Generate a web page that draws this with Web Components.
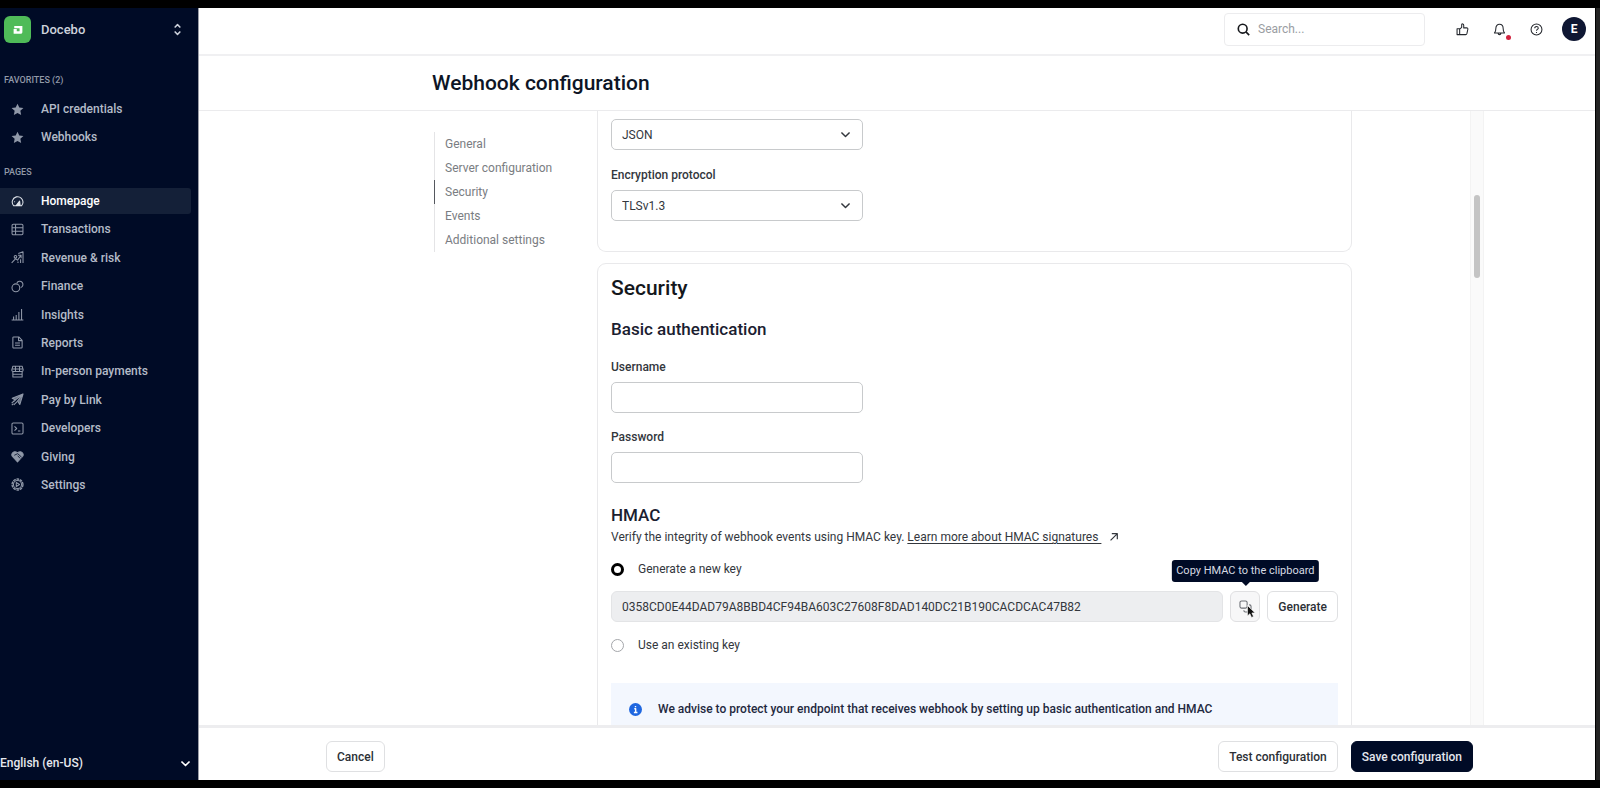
<!DOCTYPE html>
<html lang="en">
<head>
<meta charset="utf-8">
<meta name="viewport" content="width=device-width, initial-scale=1">
<title>Webhook configuration</title>
<style>
    html {
        height: 100%;
    }
    body {
        box-sizing: border-box;
        height: 100%;
        margin: 0;
        border: solid #000;
        border-width: 8px 0;
        overflow: hidden;
        background: #fff;
        color: #33373d;
        font: 400 12px/16px Roboto, "Liberation Sans", sans-serif;
        --navy: #000b26;
        --line: #f0f0f2;
        --field-line: #c8cacc;
    }
</style>
</head>
<body>

<app-shell>
    <side-bar slot="sidebar">
        <nav-group heading="Favorites (2)">
            <nav-item icon="star">API credentials</nav-item>
            <nav-item icon="star">Webhooks</nav-item>
        </nav-group>
        <nav-group heading="Pages" class="pages">
            <nav-item icon="home" active>Homepage</nav-item>
            <nav-item icon="table">Transactions</nav-item>
            <nav-item icon="revenue">Revenue &amp; risk</nav-item>
            <nav-item icon="finance">Finance</nav-item>
            <nav-item icon="insights">Insights</nav-item>
            <nav-item icon="report">Reports</nav-item>
            <nav-item icon="store">In-person payments</nav-item>
            <nav-item icon="send">Pay by Link</nav-item>
            <nav-item icon="terminal">Developers</nav-item>
            <nav-item icon="heart">Giving</nav-item>
            <nav-item icon="gear">Settings</nav-item>
        </nav-group>
    </side-bar>
    <top-bar slot="top"></top-bar>
    <page-title slot="title">Webhook configuration</page-title>
    <section-nav slot="toc"></section-nav>

    <form-card class="cut">
        <select-field options="JSON,SOAP,HTTP POST" name="Format"></select-field>
        <select-field label="Encryption protocol" options="TLSv1.3,TLSv1.2"></select-field>
    </form-card>
    <form-card heading="Security">
        <sub-heading>Basic authentication</sub-heading>
        <text-field label="Username"></text-field>
        <text-field label="Password" type="password"></text-field>
        <hmac-section></hmac-section>
        <info-banner>We advise to protect your endpoint that receives webhook by setting up basic authentication and HMAC</info-banner>
    </form-card>

    <action-bar slot="footer">
        <ui-button>Cancel</ui-button>
        <ui-button class="push">Test configuration</ui-button>
        <ui-button kind="primary">Save configuration</ui-button>
    </action-bar>
</app-shell>

<script>
const ICONS = {
    star: '<path fill="currentColor" stroke="none" d="M8 .8l2.2 4.7 5.1.6-3.8 3.5 1 5.1L8 12.2l-4.5 2.5 1-5.1L.7 6.1l5.1-.6z"/>',
    home: '<path d="M3.4 13.3A6.6 6.6 0 1 1 14.5 10.4c-.3 1-.8 2-1.6 2.9z"/><path fill="currentColor" d="M6.6 12.8l4-5.3.6 5.3z"/><path d="M4 8.2h1"/>',
    table: '<rect x="1.3" y="1.5" width="13.4" height="13" rx="1.5"/><path d="M1.3 5.8h13.4M1.3 10.1h13.4M5.6 1.5v13"/>',
    revenue: '<path d="M.8 14.5l5-5 2.3 1.8 4-6M8.6 5.3h3.8v3.5M9 3.2L14.8 1v13.8M11.8 10v4.8M8.6 12.8v2"/><circle cx="5.5" cy="7.2" r="1.6"/>',
    finance: '<circle cx="6" cy="9.6" r="4.8"/><path d="M7.2 3.6A4 4 0 1 1 12 9.3"/>',
    insights: '<path d="M.8 14.8h14.4M3.2 14v-3.6M6.4 14V8.6M9.7 14V5M13 14V1.3"/>',
    report: '<path d="M2.3 2.3c0-.6.5-1.1 1.1-1.1h6.2l4.1 4.2v8.3c0 .6-.5 1.1-1.1 1.1H3.4c-.6 0-1.1-.5-1.1-1.1zM9.3 1.4v4.3h4.2M5 8.5h6M5 11.5h6"/>',
    store: '<path d="M2.3 1.5h11.4L15 6c0 1.500-1 2-2 2H3C2 8 1 7.500 1 6zM2.300 8v6.700h11.400V8M2.300 11.500h11.400M5.500 1.500v6M10.500 1.500v6M1.500 5h13"/>',
    send: '<path fill="currentColor" fill-opacity=".75" d="M14.8 1.2L1.5 6.5l4 2zM14.8 1.2l-4 13L8 9.8z"/><path d="M5.500 8.500L3 11M7.800 10.300L3.500 14.600M4 9.500L.8 12.500M1 15l2-2"/>',
    terminal: '<rect x="1.2" y="1.2" width="13.6" height="13.6" rx="1.5"/><path d="M4.3 5.5L7 8l-2.7 2.500M8.500 11h3"/>',
    heart: '<path fill="currentColor" d="M8 14.6L1.8 8C-.6 4.800 3.500-.2 8 3.600c4.500-3.800 8.600 1.200 6.200 4.400z"/><path stroke="#000b26" stroke-width="1" d="M4 6.500L8.200 4.500l4.800 4.300M8.200 7l3 3.300"/>',
    gear: '<circle cx="8" cy="8" r="6.700" stroke-width="1.700" stroke-dasharray="3.300 .9"/><circle cx="8" cy="8" r="5"/><path d="M6.500 5.500v5l4-2.500z"/>',
    updown: '<path d="M4.500 5.500L8 2l3.500 3.500M4.500 10.500L8 14l3.500-3.500"/>',
    chevron: '<path d="M3 5.500l5 5 5-5"/>',
    search: '<circle cx="7" cy="7" r="5.400"/><path d="M11 11l4 4"/>',
    thumb: '<path d="M4.500 7v7.300H1.300V7zM4.500 7.500L7 5.300V2c0-1.300 2.500-1.300 2.500.8V6h3.700c1 0 1.600.8 1.400 1.700l-1.200 5.400c-.2.700-.8 1.200-1.500 1.200H4.500"/>',
    bell: '<path d="M1.800 12.300c1.300-1.200 1.700-2.300 1.700-5.500C3.500 3.500 5.400 1.500 8 1.500s4.500 2 4.500 5.300c0 3.200.4 4.300 1.700 5.500zM6.300 12.800c.2 2 3.200 2 3.400 0"/>',
    help: '<circle cx="8" cy="8" r="6.700"/><path d="M5.800 6.400c0-2.700 4.400-2.600 4.400 0 0 1.500-2.200 1.500-2.200 3M8 11v1.200"/>',
    external: '<path d="M2.500 13.500L13 3M4.500 2.700h8.800v8.800"/>',
    copy: '<rect x="1.200" y="1.200" width="8.800" height="8.800" rx="2"/><path d="M12.500 6h.5c1 0 1.800.8 1.800 1.800V13c0 1-.8 1.800-1.800 1.800H7.800C6.800 14.800 6 14 6 13v-.5"/>',
    info: '<circle cx="8" cy="8" r="8" fill="#1f67e0" stroke="none"/><path stroke="#fff" stroke-width="1.700" d="M6.500 7H8.200v4.500M6 11.700h4.400M8 3.600v1.700"/>',
    logo: '<path fill="currentColor" stroke="none" d="M2 1.500h13v9.500c0 1.500-1 3-3 3H1V6.500h5V10h4.500V5H2z"/>',
    cursor: '<path fill="#111" stroke="#fff" stroke-width=".8" d="M3 .5v13l3-2.700 2 4.500 2.500-1.100-2-4.400h4z"/>'
};

// Small helper shared by every element on the page
function render(el, css, html) {
    const template = document.createElement('template');
    template.innerHTML = `<style>:host, * { box-sizing: border-box; } ${css}</style>${html}`;
    el.attachShadow({ mode: 'open' }).appendChild(template.content.cloneNode(true));
}

class AppIcon extends HTMLElement {
    connectedCallback() {
        render(this, `
            :host { display: block; flex: none; width: 13px; height: 13px; }
            svg { display: block; width: 100%; height: 100%; fill: none; stroke: currentColor;
                  stroke-width: var(--stroke, 1.3); stroke-linejoin: round; }
        `, `<svg viewBox="0 0 16 16" aria-hidden="true">${ICONS[this.getAttribute('name')]}</svg>`);
    }
}

class AppShell extends HTMLElement {
    connectedCallback() {
        render(this, `
            :host { display: flex; height: 100%; border-right: 4px solid #242424; }
            .main { flex: 1; min-width: 0; display: flex; flex-direction: column;
                    border-left: 1px solid #9a9da6; border-right: 1px solid #000; }
            .scroll { flex: 1; min-height: 0; display: flex; overflow: hidden;
                      margin: 0 111px 0 233px; }
            .cards { flex: 1; min-width: 0; display: flex; flex-direction: column; gap: 11px;
                     padding-right: 118px; }
            .track { flex: none; width: 14px; padding: 84px 3px 0; background: #fafafa;
                     border: solid #f3f3f3; border-width: 0 1px; }
            .thumb { height: 83px; border-radius: 4px; background: #c4c4c4; }
        `, `
            <slot name="sidebar"></slot>
            <div class="main">
                <slot name="top"></slot>
                <slot name="title"></slot>
                <div class="scroll">
                    <slot name="toc"></slot>
                    <div class="cards"><slot></slot></div>
                    <div class="track"><div class="thumb"></div></div>
                </div>
                <slot name="footer"></slot>
            </div>
        `);
    }
}

class SideBar extends HTMLElement {
    connectedCallback() {
        render(this, `
            :host { display: flex; flex-direction: column; flex: none; width: 198px;
                    background: var(--navy); color: #cdd2dc; }
            header { display: flex; align-items: center; gap: 10px; padding: 8px 14px 8px 4px;
                     font-size: 13px; font-weight: 500; }
            .logo { display: grid; place-items: center; width: 27px; height: 27px;
                    border-radius: 6px; background: #4fbb58; color: #fff; }
            .logo app-icon { width: 10px; height: 10px; }
            header span:last-of-type { flex: 1; }
            nav { flex: 1; display: flex; flex-direction: column; gap: 14px; padding: 21px 7px 0 0; }
            .lang { display: grid; align-items: center; margin-bottom: 5px; font-weight: 500; }
            .lang > * { grid-area: 1 / 1; }
            select { appearance: none; height: 24px; padding: 0; border: 0; background: none;
                     color: #e6e9ef; font: inherit; }
            .lang app-icon { justify-self: end; margin-right: 6px; pointer-events: none; --stroke: 2; color: #fff; }
        `, `
            <header>
                <span class="logo"><app-icon name="logo"></app-icon></span>
                <span>Docebo</span>
                <app-icon name="updown" style="--stroke: 1.8"></app-icon>
            </header>
            <nav><slot></slot></nav>
            <div class="lang">
                <select aria-label="Language"><option>English (en-US)</option></select>
                <app-icon name="chevron"></app-icon>
            </div>
        `);
    }
}

class NavGroup extends HTMLElement {
    connectedCallback() {
        render(this, `
            :host { display: block; }
            h2 { margin: 0 0 8px 4px; font-size: 9px; line-height: 16px; font-weight: 500;
                 text-transform: uppercase; color: #9199a8; }
            .list { display: flex; flex-direction: column; justify-content: space-between; gap: 2px; }
            :host(.pages) .list { height: 310px; }
        `, `<h2>${this.getAttribute('heading')}</h2><div class="list"><slot></slot></div>`);
    }
}

class NavItem extends HTMLElement {
    connectedCallback() {
        render(this, `
            :host { display: block; }
            a { display: flex; align-items: center; gap: 17px; height: 26px; padding-left: 11px;
                border-radius: 0 3px 3px 0; color: #b4bbc8; font-weight: 500; text-decoration: none; }
            app-icon { color: #8f98a8; }
            :host([active]) a { background: #142038; color: #fff; }
            :host([active]) app-icon { color: #dfe3ea; }
        `, `<a href="#"><app-icon name="${this.getAttribute('icon')}"></app-icon><slot></slot></a>`);
    }
}

class TopBar extends HTMLElement {
    connectedCallback() {
        render(this, `
            :host { display: flex; align-items: center; justify-content: flex-end; flex: none;
                    height: 48px; padding: 0 9px 4px 0; border-bottom: 2px solid var(--line); }
            label { display: flex; align-items: center; gap: 8px; width: 201px; height: 33px;
                    margin-right: 19px; padding: 0 12px; border: 1px solid #ececee; border-radius: 4px;
                    color: #16181c; --stroke: 2; }
            input { flex: 1; min-width: 0; padding: 0; border: 0; outline: 0; background: none; font: inherit; }
            input::placeholder { color: #9a9da2; }
            button { position: relative; display: grid; place-items: center; width: 37px; height: 28px;
                     padding: 0; border: 0; background: none; color: #25282e; }
            .dot::after { content: ""; position: absolute; right: 7px; bottom: 3px; width: 5px; height: 5px;
                          border-radius: 50%; background: #d2233f; }
            .avatar { width: 24px; height: 24px; margin-left: 7px; border-radius: 50%;
                      background: #0f1733; color: #fff; font: inherit; font-weight: 700; }
        `, `
            <label><app-icon name="search"></app-icon><input type="search" placeholder="Search..." aria-label="Search"></label>
            <button aria-label="Feedback"><app-icon name="thumb"></app-icon></button>
            <button class="dot" aria-label="Notifications"><app-icon name="bell"></app-icon></button>
            <button aria-label="Help"><app-icon name="help"></app-icon></button>
            <button class="avatar">E</button>
        `);
    }
}

class PageTitle extends HTMLElement {
    connectedCallback() {
        render(this, `
            :host { display: block; flex: none; padding: 14px 233px 13px; border-bottom: 1px solid #ebebed; }
            h1 { margin: 0; font-size: 21px; line-height: 27px; font-weight: 500; color: #0d1526; }
        `, '<h1><slot></slot></h1>');
    }
}

class SectionNav extends HTMLElement {
    connectedCallback() {
        const links = ['General', 'Server configuration', 'Security', 'Events', 'Additional settings'];
        render(this, `
            :host { display: block; flex: none; width: 165px; padding: 21px 0 0 2px; }
            a { display: block; height: 24px; padding-left: 10px; border-left: 1px solid #e4e4e6;
                line-height: 24px; color: #7a7d82; text-decoration: none; }
            a.current { border-color: #55585e; }
        `, `<nav aria-label="Sections">${links.map(text =>
            `<a href="#"${text === 'Security' ? ' class="current"' : ''}>${text}</a>`).join('')}</nav>`);
    }
}

class FormCard extends HTMLElement {
    connectedCallback() {
        const heading = this.getAttribute('heading');
        render(this, `
            :host { display: flex; flex-direction: column; flex: none; padding: 11px 13px;
                    border: 1px solid #e9e9eb; border-radius: 9px; }
            :host(.cut) { gap: 17px; padding: 8px 13px 30px; border-top: 0; border-radius: 0 0 9px 9px; }
            h2 { margin: 0 0 17px; font-size: 21px; line-height: 26px; font-weight: 500; color: #14171c; }
        `, `${heading ? `<h2>${heading}</h2>` : ''}<slot></slot>`);
    }
}

class SubHeading extends HTMLElement {
    connectedCallback() {
        render(this, `
            :host { display: block; }
            h3 { margin: 0 0 19px; font-size: 17px; line-height: 22px; font-weight: 500; color: #1a2030; }
        `, '<h3><slot></slot></h3>');
    }
}

const FIELD_CSS = `
    :host { display: block; }
    label { display: block; margin-bottom: 7px; font-weight: 500; }
    input, select { display: block; width: 252px; height: 31px; padding: 0 10px; outline: 0;
                    border: 1px solid var(--field-line); border-radius: 5px; background: #fff;
                    color: inherit; font: inherit; }
`;

class SelectField extends HTMLElement {
    connectedCallback() {
        const label = this.getAttribute('label');
        const options = this.getAttribute('options').split(',');
        render(this, `${FIELD_CSS}
            .box { display: grid; align-items: center; width: 252px; }
            .box > * { grid-area: 1 / 1; }
            select { appearance: none; }
            app-icon { justify-self: end; margin-right: 11px; pointer-events: none; --stroke: 1.8; }
        `, `
            ${label ? `<label for="field">${label}</label>` : ''}
            <div class="box">
                <select id="field" aria-label="${label || this.getAttribute('name')}">
                    ${options.map(option => `<option>${option}</option>`).join('')}
                </select>
                <app-icon name="chevron"></app-icon>
            </div>
        `);
    }
}

class TextField extends HTMLElement {
    connectedCallback() {
        render(this, `${FIELD_CSS} :host { margin-bottom: 16px; }`, `
            <label for="field">${this.getAttribute('label')}</label>
            <input id="field" type="${this.getAttribute('type') || 'text'}">
        `);
    }
}

class HmacSection extends HTMLElement {
    connectedCallback() {
        render(this, `
            :host { display: block; margin: 4px 0 29px; }
            h3 { margin: 0; font-size: 17px; line-height: 24px; font-weight: 500; color: #1a2030; }
            p { display: flex; gap: 8px; align-items: center; margin: 1px 0 14px; line-height: 18px; }
            a { color: inherit; text-underline-offset: 2px; white-space: pre; }
            p app-icon { width: 10px; height: 10px; --stroke: 1.9; }
            .option { display: flex; align-items: center; gap: 14px; height: 18px; }
            .option input { appearance: none; width: 13px; height: 13px; margin: 0; border-radius: 50%;
                            border: 1px solid #a4a6aa; background: #fff; }
            .option input:checked { border: 3px solid #000; }
            .key { display: flex; gap: 7px; margin: 13px 0 14px; }
            .key input { flex: 1; min-width: 0; height: 31px; padding: 0 10px; border: 1px solid #e3e4e6;
                         border-radius: 6px; background: #edeef0; color: inherit; font: inherit; }
            .copy { position: relative; display: flex; }
            .copy button { display: grid; place-items: center; width: 30px; border: 1px solid #e0e0e2;
                           border-radius: 6px; background: #f7f7f8; color: #6b6e74; padding: 0; }
            .tip { position: absolute; bottom: 40px; left: 50%; translate: -50%; padding: 3px 4px;
                   border-radius: 3px; background: var(--navy); color: #d6dae2; font-size: 11px;
                   white-space: nowrap; }
            .tip::after { content: ""; position: absolute; top: 100%; left: 50%; translate: -50%;
                          border: 4px solid transparent; border-top-color: var(--navy); border-bottom: 0; }
            .cursor { position: absolute; left: 15px; top: 14px; }
        `, `
            <h3>HMAC</h3>
            <p><span>Verify the integrity of webhook events using HMAC key. <a href="#">Learn more about HMAC signatures </a></span><app-icon name="external"></app-icon></p>
            <div class="option">
                <input type="radio" name="key" id="new" checked><label for="new">Generate a new key</label>
            </div>
            <div class="key">
                <input readonly aria-label="HMAC key" value="0358CD0E44DAD79A8BBD4CF94BA603C27608F8DAD140DC21B190CACDCAC47B82">
                <div class="copy">
                    <button aria-label="Copy"><app-icon name="copy"></app-icon></button>
                    <div class="tip" role="tooltip">Copy HMAC to the clipboard</div>
                    <app-icon class="cursor" name="cursor"></app-icon>
                </div>
                <ui-button>Generate</ui-button>
            </div>
            <div class="option">
                <input type="radio" name="key" id="existing"><label for="existing">Use an existing key</label>
            </div>
        `);
    }
}

class InfoBanner extends HTMLElement {
    connectedCallback() {
        render(this, `
            :host { display: flex; align-items: center; gap: 16px; padding: 18px 18px 26px;
                    background: #f3f7fe; color: #1f2940; font-weight: 500; }
        `, '<app-icon name="info"></app-icon><span><slot></slot></span>');
    }
}

class UiButton extends HTMLElement {
    connectedCallback() {
        render(this, `
            :host { display: block; }
            button { height: 31px; padding: 0 10px; border: 1px solid #dfe0e2; border-radius: 6px;
                     background: #fff; color: #2c3036; font: inherit; font-weight: 500; white-space: nowrap; }
            :host([kind="primary"]) button { border-color: var(--navy); background: var(--navy); color: #e4e7ee; }
        `, '<button type="button"><slot></slot></button>');
    }
}

class ActionBar extends HTMLElement {
    connectedCallback() {
        render(this, `
            :host { display: flex; gap: 13px; flex: none; padding: 13px 122px 8px 127px;
                    border-top: 3px solid #ededef; background: #fff; }
            ::slotted(.push) { margin-left: auto; }
        `, '<slot></slot>');
    }
}

customElements.define('app-icon', AppIcon);
customElements.define('app-shell', AppShell);
customElements.define('side-bar', SideBar);
customElements.define('nav-group', NavGroup);
customElements.define('nav-item', NavItem);
customElements.define('top-bar', TopBar);
customElements.define('page-title', PageTitle);
customElements.define('section-nav', SectionNav);
customElements.define('form-card', FormCard);
customElements.define('sub-heading', SubHeading);
customElements.define('select-field', SelectField);
customElements.define('text-field', TextField);
customElements.define('hmac-section', HmacSection);
customElements.define('info-banner', InfoBanner);
customElements.define('ui-button', UiButton);
customElements.define('action-bar', ActionBar);
</script>
</body>
</html>
